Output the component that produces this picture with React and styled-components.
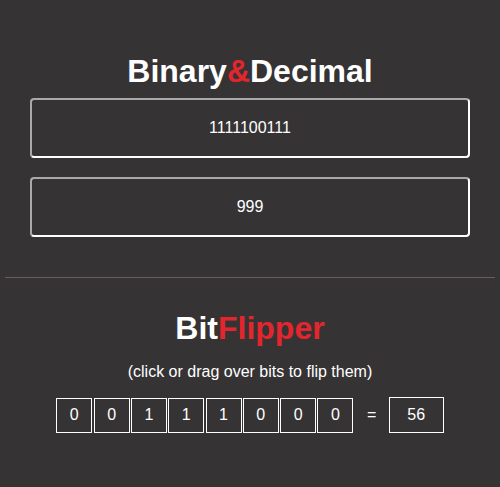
import React, {useState} from 'react';
import styled, {createGlobalStyle} from 'styled-components';

const GlobalStyle = createGlobalStyle`
  body {
    margin: 0;
    background-color: #353334;
    font-family: "Liberation Sans", Arial, sans-serif;
    color: #ffffff;
  }
`;

const Page = styled.div`
  display: flex;
  flex-direction: column;
  align-items: center;
  padding: 53px 5px 40px;
`;

const Title = styled.h1`
  margin: 0;
  font-size: 32px;
  line-height: 37px;
  font-weight: bold;
  color: #ffffff;
  span {
    color: #e3262e;
  }
`;

const Field = styled.input`
  box-sizing: border-box;
  width: 440px;
  height: 60px;
  margin-top: ${({gap}) => gap}px;
  border: 2px solid #ffffff;
  border-top-color: #a9a9a9;
  border-left-color: #a9a9a9;
  border-radius: 4px;
  background: transparent;
  color: #ffffff;
  font-family: "Liberation Sans", Arial, sans-serif;
  font-size: 16px;
  text-align: center;
  outline: none;
`;

const Divider = styled.hr`
  align-self: stretch;
  margin: 40px 0 32px;
  border: none;
  height: 1px;
  background-color: #6b5b5c;
`;

const Hint = styled.p`
  margin: 16px 0 17px;
  font-size: 16px;
  line-height: 17px;
`;

const BitRow = styled.div`
  display: flex;
  align-items: center;
`;

const Bit = styled.div`
  box-sizing: border-box;
  width: 36px;
  height: 35px;
  margin-right: 1.3px;
  border: 1px solid #ffffff;
  display: flex;
  align-items: center;
  justify-content: center;
  font-size: 16px;
  cursor: pointer;
  user-select: none;
`;

const Equals = styled.span`
  width: 34px;
  text-align: center;
  font-size: 16px;
`;

const Result = styled.div`
  box-sizing: border-box;
  width: 55px;
  height: 36px;
  border: 1px solid #ffffff;
  display: flex;
  align-items: center;
  justify-content: center;
  font-size: 16px;
`;

const App = () => {
    const [bits, setBits] = useState([0, 0, 1, 1, 1, 0, 0, 0]);
    const value = bits.reduce((acc, b) => acc * 2 + b, 0);

    const flip = (index) => {
        setBits(bits.map((b, i) => (i === index ? 1 - b : b)));
    };

    return (
        <>
            <GlobalStyle/>
            <Page>
                <Title>Binary<span>&amp;</span>Decimal</Title>
                <Field gap={8} readOnly value="1111100111"/>
                <Field gap={19} readOnly value="999"/>
                <Divider/>
                <Title>Bit<span>Flipper</span></Title>
                <Hint>(click or drag over bits to flip them)</Hint>
                <BitRow>
                    {bits.map((b, index) => (
                        <Bit key={index} onClick={() => flip(index)}>{b}</Bit>
                    ))}
                    <Equals>=</Equals>
                    <Result>{value}</Result>
                </BitRow>
            </Page>
        </>
    );
};

export default App;
